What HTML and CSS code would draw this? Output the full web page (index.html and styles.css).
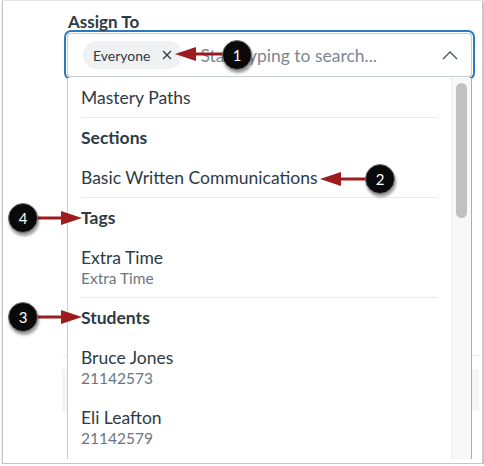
FILE: index.html
```html
<!DOCTYPE html>
<html lang="en">
<head>
  <meta charset="UTF-8">
  <title>Assign To</title>
  <link rel="stylesheet" href="styles.css">
</head>
<body>
  <div class="frame">
    <div class="field">
      <div class="field-label">Assign To</div>
      <div class="combo">
        <span class="tag">Everyone
          <svg class="tag-x" width="10" height="10" viewBox="0 0 10 10"><path d="M1 1 L9 9 M9 1 L1 9" stroke="#2d3b45" stroke-width="1.3" fill="none"/></svg>
        </span>
        <span class="placeholder">Start typing to search...</span>
        <svg class="chevron" width="16" height="9" viewBox="0 0 16 9"><path d="M1 8 L8 1 L15 8" stroke="#4a5660" stroke-width="1.4" fill="none"/></svg>
      </div>
    </div>

    <div class="backdrop">
      <div class="backdrop-bar"></div>
    </div>

    <div class="menu">
      <div class="menu-list">
        <div class="option">Mastery Paths</div>
        <div class="divider"></div>
        <div class="group-title">Sections</div>
        <div class="option">Basic Written Communications</div>
        <div class="divider"></div>
        <div class="group-title">Tags</div>
        <div class="option two-line">Extra Time<span class="sub">Extra Time</span></div>
        <div class="divider"></div>
        <div class="group-title">Students</div>
        <div class="option two-line">Bruce Jones<span class="sub">21142573</span></div>
        <div class="option two-line">Eli Leafton<span class="sub">21142579</span></div>
      </div>
      <div class="scrollbar"><div class="thumb"></div></div>
    </div>

    <svg class="arrows" width="478" height="462" viewBox="3 1 478 462">
      <g fill="#9b1b1f" stroke="#9b1b1f">
        <line x1="194" y1="54" x2="226" y2="54" stroke-width="3"/>
        <polygon points="175,54 196,47 196,61" stroke="none"/>
        <line x1="339" y1="179" x2="368" y2="179" stroke-width="3"/>
        <polygon points="320,179 341,172 341,186" stroke="none"/>
        <line x1="34" y1="218" x2="63" y2="218" stroke-width="3"/>
        <polygon points="82,218 61,211 61,225" stroke="none"/>
        <line x1="34" y1="317" x2="63" y2="317" stroke-width="3"/>
        <polygon points="82,317 61,310 61,324" stroke="none"/>
      </g>
    </svg>

    <div class="badge badge-1">1</div>
    <div class="badge badge-2">2</div>
    <div class="badge badge-3">3</div>
    <div class="badge badge-4">4</div>
  </div>
</body>
</html>
```

FILE: styles.css
```css
:root {
  --text: #2d3b45;
  --muted: #6b7780;
  --line: #e8eaec;
  --focus: #2b7abc;
  --callout: #9b1b1f;
}

body {
  margin: 0;
  background: #fff;
  font-family: Lato, 'Liberation Sans', sans-serif;
  color: var(--text);
}

.frame {
  position: relative;
  margin-left: 2px;
  width: 481px;
  height: 464px;
  box-sizing: border-box;
  border: 1px solid #c4c4c4;
  border-top-color: #e4e4e4;
  box-shadow: 1px 2px 3px rgba(0,0,0,0.35);
  background: #fff;
  overflow: hidden;
}

.field {
  padding: 11px 0 0 64px;
}

.field-label {
  font-size: 17px;
  font-weight: 700;
  line-height: 20px;
  padding-left: 1px;
  margin-bottom: 1px;
}

.combo {
  display: flex;
  align-items: center;
  width: 405px;
  height: 44px;
  box-sizing: border-box;
  border: 1px solid #c7cdd1;
  border-radius: 4px;
  box-shadow: 0 0 0 1px #fff, 0 0 0 3px var(--focus);
  padding: 0 13px 0 15px;
}

.tag {
  display: flex;
  align-items: center;
  gap: 12px;
  height: 28px;
  padding: 0 10px;
  border-radius: 14px;
  background: #f0f1f2;
  font-size: 14px;
}

.placeholder {
  margin-left: 18px;
  flex: 1;
  font-size: 17.5px;
  color: #7b8891;
}

.chevron {
  display: block;
}

.backdrop {
  margin: 278px 3px 0 59px;
  border-top: 1px solid #eeeeee;
  padding-top: 13px;
}

.backdrop-bar {
  height: 42px;
  background: #f5f5f5;
}

.menu {
  position: absolute;
  left: 64px;
  top: 77px;
  width: 405px;
  height: 381px;
  box-sizing: border-box;
  display: flex;
  background: #fff;
  border-left: 1px solid #c7cdd1;
  border-right: 1px solid #a9adb0;
}

.menu-list {
  flex: 1;
  font-size: 17.5px;
}

.option,
.group-title {
  height: 40px;
  line-height: 40px;
  padding: 0 13px;
  white-space: nowrap;
}

.group-title {
  font-weight: 700;
}

.option.two-line {
  height: 60px;
  box-sizing: border-box;
  padding-top: 10px;
  line-height: 20px;
}

.sub {
  display: block;
  font-size: 15.5px;
  color: var(--muted);
}

.divider {
  position: relative;
  height: 1px;
  margin: -1px 13px 0;
  background: var(--line);
}

.scrollbar {
  width: 20px;
  box-sizing: border-box;
  border-left: 1px solid #ececec;
  background: #f8f8f8;
  padding: 5px 0 0 4px;
}

.thumb {
  width: 11px;
  height: 135px;
  border-radius: 6px;
  background: #c1c1c1;
}

.arrows {
  position: absolute;
  left: 0;
  top: 0;
}

.badge {
  position: absolute;
  width: 30px;
  height: 30px;
  border-radius: 50%;
  background: #0a0a0a;
  border: 1px solid #777;
  box-sizing: border-box;
  box-shadow: 1px 3px 3px rgba(0,0,0,0.4);
  color: #fff;
  font-size: 15px;
  line-height: 28px;
  text-align: center;
}

.badge-1 { left: 219px; top: 39px; }
.badge-2 { left: 362px; top: 163px; }
.badge-3 { left: 5px; top: 301px; }
.badge-4 { left: 5px; top: 202px; }
```
